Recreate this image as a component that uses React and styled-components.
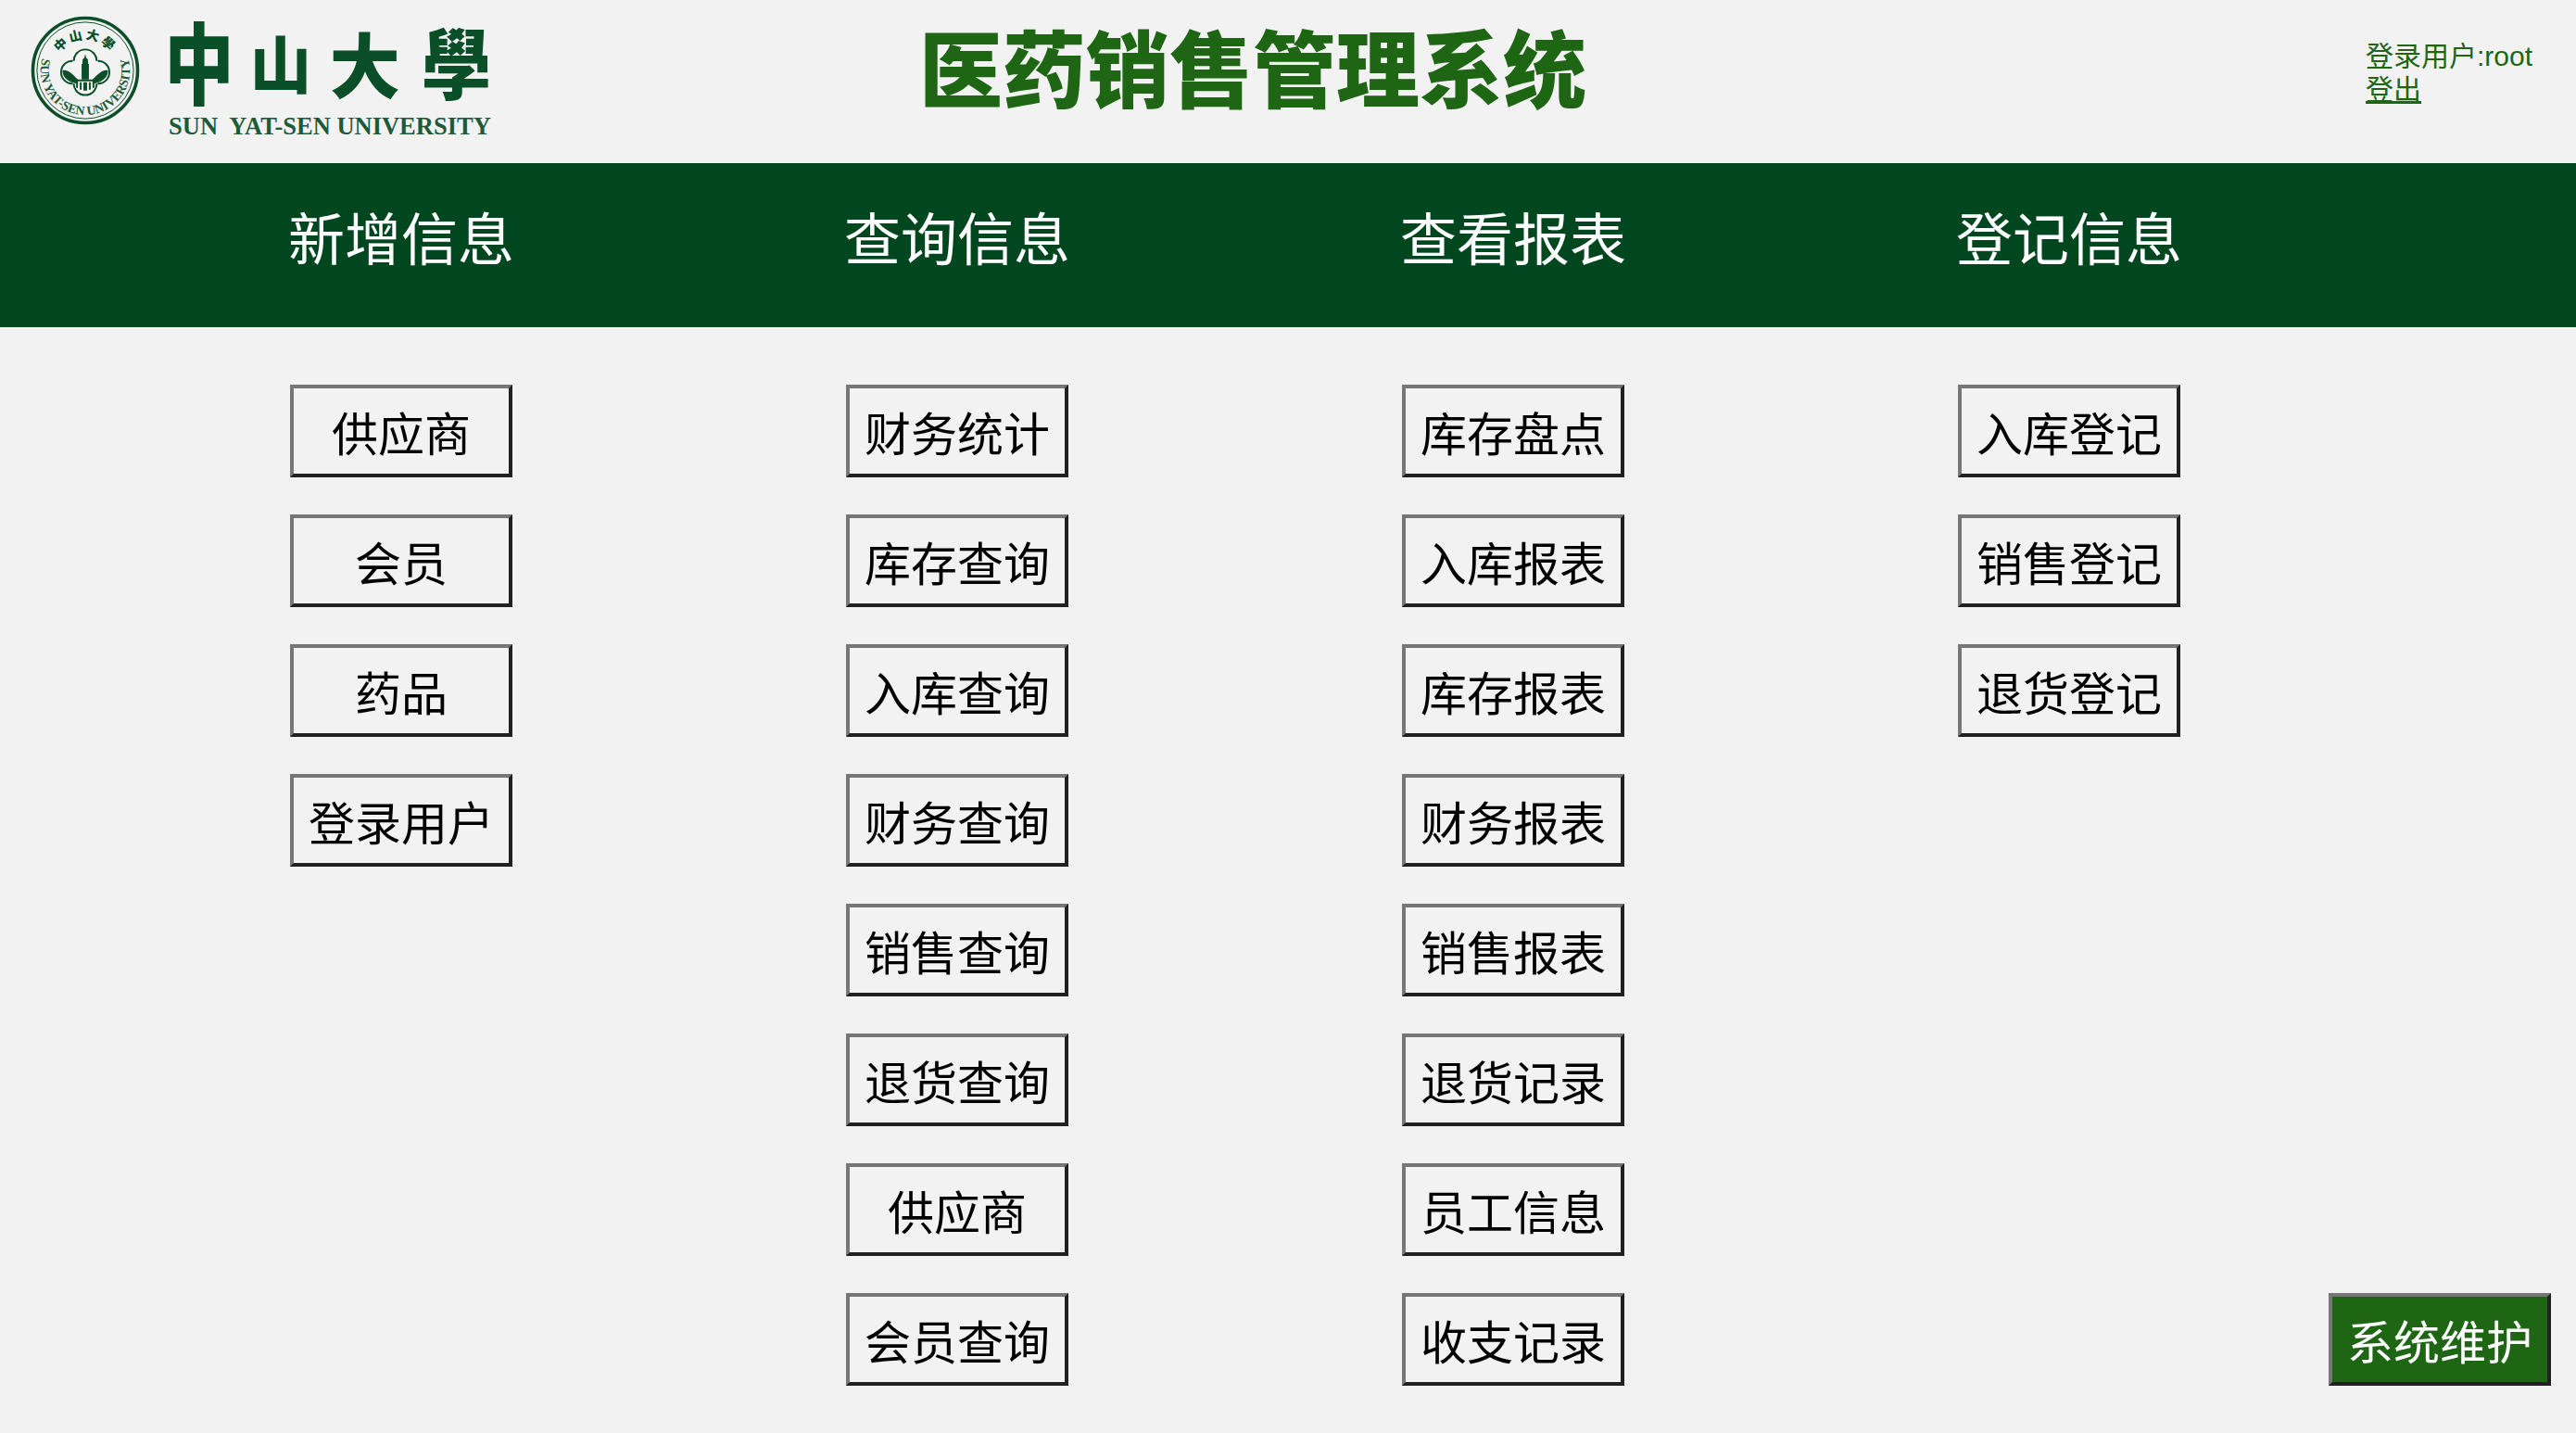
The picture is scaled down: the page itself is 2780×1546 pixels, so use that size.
import styled, { createGlobalStyle } from "styled-components";

const GlobalStyle = createGlobalStyle`
  html, body {
    margin: 0;
    padding: 0;
    background-color: #f2f2f2;
  }
  body {
    font-family: "Liberation Sans", "Noto Sans CJK SC", sans-serif;
  }
`;

const Page = styled.div`
  width: 2780px;
  height: 1546px;
  overflow: hidden;
  background-color: #f2f2f2;
`;

const Header = styled.header`
  display: grid;
  grid-template-columns: 992px 718px 1fr;
  height: 176px;
`;

const Brand = styled.div`
  display: flex;
  gap: 31px;
  padding: 16px 0 0 33px;
`;

const SealSvg = styled.svg`
  display: block;
  flex: none;
  width: 118px;
  height: 118px;
  margin-top: 1px;
`;

const Wordmark = styled.div`
  display: flex;
  flex-direction: column;
`;

const WordmarkCn = styled.div`
  display: grid;
  grid-template-columns: 66px 56px 73px 71px;
  justify-content: space-between;
  align-items: center;
  width: 346px;
  height: 108px;
  color: #0a4f28;
  font-family: "Noto Sans CJK TC", sans-serif;
  font-weight: 900;
  line-height: 1;
`;

const Glyph = styled.span`
  justify-self: center;
  width: max-content;
  white-space: nowrap;
  font-size: ${({ $size }) => $size}px;
  transform: translateY(${({ $dy = 0 }) => $dy}px)
    scale(${({ $sx = 1 }) => $sx}, ${({ $sy = 1 }) => $sy});
`;

const WordmarkEn = styled.div`
  margin-top: 1px;
  color: #1d5a38;
  font-family: "Liberation Serif", serif;
  font-weight: 700;
  font-size: 26.5px;
  line-height: 22px;
  white-space: pre;
  width: 346px;
`;

const Title = styled.h1`
  margin: 0;
  padding-top: 20px;
  color: #1e6614;
  font-family: "Noto Sans CJK SC", sans-serif;
  font-size: 90px;
  font-weight: 900;
  line-height: 100px;
  white-space: nowrap;
`;

const UserBox = styled.div`
  padding: 43px 0 0 843px;
  color: #1e6614;
  font-size: 30px;
  line-height: 36px;
  white-space: nowrap;
`;

const Logout = styled.a`
  display: block;
  width: max-content;
  color: #1e6614;
  text-decoration: underline;
  text-decoration-thickness: 3px;
`;

const Nav = styled.nav`
  box-sizing: border-box;
  display: flex;
  gap: 360px;
  align-items: center;
  height: 177px;
  padding: 0 0 20px 313px;
  background-color: #004720;
`;

const NavItem = styled.div`
  display: flex;
  justify-content: center;
  width: 240px;
  color: #fff;
  font-family: "Noto Sans CJK SC", sans-serif;
  font-size: 61px;
  line-height: 80px;
  white-space: nowrap;
`;

const Main = styled.main`
  display: flex;
  padding: 62px 0 0 313px;
`;

const Columns = styled.div`
  display: flex;
  gap: 360px;
`;

const Column = styled.div`
  display: flex;
  flex-direction: column;
  gap: 40px;
  width: 240px;
`;

const Aside = styled.div`
  align-self: flex-end;
  margin-left: 160px;
`;

const Button = styled.button`
  box-sizing: border-box;
  width: 240px;
  height: 100px;
  padding: 0;
  border-style: solid;
  border-width: 4px;
  border-color: #767676 #212121 #212121 #767676;
  background-color: ${({ $primary }) => ($primary ? "#1e6614" : "#f2f2f2")};
  color: ${({ $primary }) => ($primary ? "#fff" : "#000")};
  font-family: "Noto Sans CJK SC", sans-serif;
  font-size: 50px;
  line-height: 1;
  white-space: nowrap;
`;

const Seal = () => (
  <SealSvg viewBox="-60 -60 120 120">
    <defs>
      <path id="sealTop" d="M -34 0 A 34 34 0 0 1 34 0" />
      <path id="sealBottom" d="M -47 -14 A 49 49 0 1 0 47 -14" />
    </defs>
    <circle r="57.5" fill="none" stroke="#0a4f28" strokeWidth="3.6" />
    <circle r="53" fill="none" stroke="#0a4f28" strokeWidth="1" />
    <text
      fill="#0a4f28"
      fontFamily="'Noto Sans CJK TC', sans-serif"
      fontSize="14"
      fontWeight="900"
    >
      <textPath href="#sealTop" startOffset="50%" textAnchor="middle" letterSpacing="2.6">
        中山大學
      </textPath>
    </text>
    <text
      fill="#1d5a38"
      fontFamily="'Liberation Serif', serif"
      fontSize="14"
      fontWeight="700"
    >
      <textPath href="#sealBottom" startOffset="50%" textAnchor="middle">
        SUN YAT-SEN UNIVERSITY
      </textPath>
    </text>
    <g transform="translate(0 2)">
      <g fill="#0a4f28">
        <circle cx="0" cy="-12.5" r="13.5" />
        <circle cx="0" cy="12.5" r="13.5" />
        <circle cx="-14" cy="0" r="13.5" />
        <circle cx="14" cy="0" r="13.5" />
        <rect x="-14" y="-12.5" width="28" height="25" />
      </g>
      <g fill="#f2f2f2">
        <circle cx="0" cy="-12.5" r="11.5" />
        <circle cx="0" cy="12.5" r="11.5" />
        <circle cx="-14" cy="0" r="11.5" />
        <circle cx="14" cy="0" r="11.5" />
        <rect x="-14" y="-12.5" width="28" height="25" />
      </g>
      <path
        d="M -25 -2 C -19 -4 -13 3 -8 8 L -8 13 L -15 11 C -22 8 -25 3 -25 -2 Z M 25 -2 C 19 -4 13 3 8 8 L 8 13 L 15 11 C 22 8 25 3 25 -2 Z"
        fill="#0a4f28"
      />
      <path
        d="M 0 -20 L 1 -16 L 3 -14 L 3 -9 L 4 -9 L 4 8 L -4 8 L -4 -9 L -3 -9 L -3 -14 L -1 -16 Z"
        fill="#0a4f28"
      />
      <path
        d="M -12 8 H 12 V 10 H -12 Z M -10 11 H -8 V 17 H -10 Z M -6 11 H -4 V 19 H -6 Z M 4 11 H 6 V 19 H 4 Z M 8 11 H 10 V 17 H 8 Z M -2 11 H 2 V 20 H -2 Z"
        fill="#0a4f28"
      />
    </g>
  </SealSvg>
);

const navItems = ["新增信息", "查询信息", "查看报表", "登记信息"];

const columns = [
  ["供应商", "会员", "药品", "登录用户"],
  ["财务统计", "库存查询", "入库查询", "财务查询", "销售查询", "退货查询", "供应商", "会员查询"],
  ["库存盘点", "入库报表", "库存报表", "财务报表", "销售报表", "退货记录", "员工信息", "收支记录"],
  ["入库登记", "销售登记", "退货登记"],
];

export default function App() {
  return (
    <Page>
      <GlobalStyle />
      <Header>
        <Brand>
          <Seal />
          <Wordmark>
            <WordmarkCn>
              <Glyph $size={96} $sx={0.78} $dy={-6}>中</Glyph>
              <Glyph $size={66} $dy={-4}>山</Glyph>
              <Glyph $size={76} $dy={-3}>大</Glyph>
              <Glyph $size={75} $sy={1.1} $dy={-5}>學</Glyph>
            </WordmarkCn>
            <WordmarkEn>SUN  YAT-SEN UNIVERSITY</WordmarkEn>
          </Wordmark>
        </Brand>
        <Title>医药销售管理系统</Title>
        <UserBox>
          登录用户:root
          <Logout href="#">登出</Logout>
        </UserBox>
      </Header>
      <Nav>
        {navItems.map((item) => (
          <NavItem key={item}>{item}</NavItem>
        ))}
      </Nav>
      <Main>
        <Columns>
          {columns.map((items, i) => (
            <Column key={i}>
              {items.map((label) => (
                <Button key={label}>{label}</Button>
              ))}
            </Column>
          ))}
        </Columns>
        <Aside>
          <Button $primary>系统维护</Button>
        </Aside>
      </Main>
    </Page>
  );
}
